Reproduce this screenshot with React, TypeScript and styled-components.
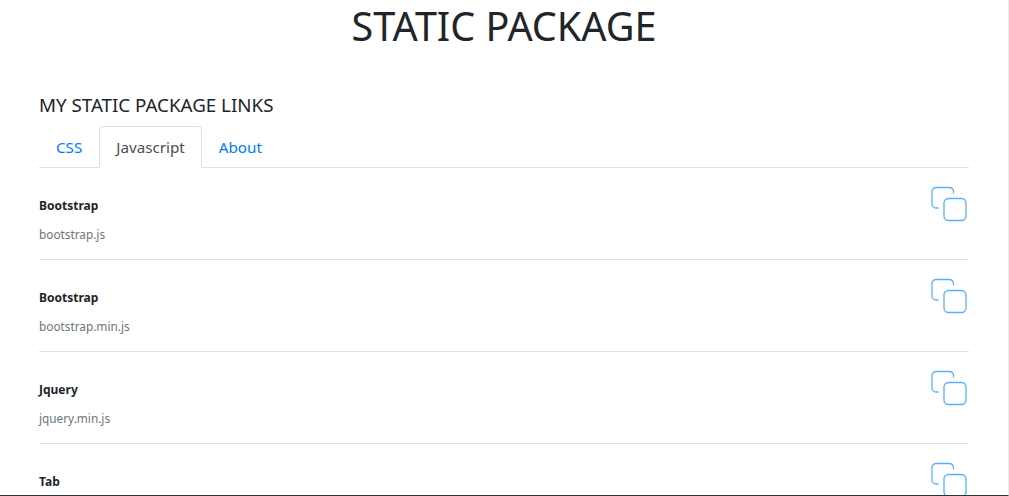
import styled, { createGlobalStyle } from 'styled-components'
import type { FC } from 'react'

const Global = createGlobalStyle`
  html, body {
    margin: 0;
    padding: 0;
    height: 100%;
    overflow: hidden;
    background: #fff;
  }
  * { box-sizing: border-box; }
`

const Page = styled.div`
  width: 1009px;
  height: 496px;
  overflow: hidden;
  background: #fff;
  border-right: 1px solid #ececec;
  border-bottom: 1px solid #2b333b;
  font-family: "Noto Sans", "Open Sans", sans-serif;
  color: #212529;
`

const Title = styled.h1`
  margin: 0;
  height: 92px;
  font-size: 39.5px;
  font-weight: 400;
  line-height: 52px;
  text-align: center;
  color: #212529;
`

const Container = styled.div`
  width: 930px;
  margin-left: 39px;
`

const Heading = styled.h2`
  margin: -1px 0 7px;
  font-size: 18.75px;
  font-weight: 400;
  line-height: 28px;
  color: #212529;
`

const Tabs = styled.ul`
  display: flex;
  margin: 0;
  padding: 0;
  list-style: none;
  border-bottom: 1px solid #dee2e6;
  height: 42px;
`

const Tab = styled.li<{ $active?: boolean }>`
  height: 42px;
  padding: 0 16px;
  font-size: 15.2px;
  line-height: 40px;
  color: ${p => (p.$active ? '#495057' : '#007bff')};
  background: ${p => (p.$active ? '#fff' : 'transparent')};
  border: 1px solid ${p => (p.$active ? '#dee2e6' : 'transparent')};
  border-bottom-color: ${p => (p.$active ? '#fff' : 'transparent')};
  border-radius: 4px 4px 0 0;
`

const Row = styled.div`
  display: flex;
  justify-content: space-between;
  height: 92px;
  padding-top: 28px;
  border-bottom: 1px solid #dee2e6;
`

const Name = styled.div`
  font-size: 12px;
  font-weight: 700;
  line-height: 20px;
  color: #212529;
`

const File = styled.div`
  margin-top: 8px;
  font-size: 11.8px;
  line-height: 20px;
  color: #6c757d;
`

const CopyButton = styled.div`
  align-self: flex-start;
  margin: -10px 2px 0 0;
  width: 36px;
  height: 36px;
  color: #5aaeff;
`

const CopyIcon: FC = () => (
  <svg width="36" height="36" viewBox="0 0 36 36" fill="none" stroke="currentColor" strokeWidth="1.3">
    <rect x="13" y="12.5" width="22" height="22" rx="4.5" />
    <path d="M22.5 7.5V5.5a4 4 0 0 0-4-4H5a4 4 0 0 0-4 4V18a4 4 0 0 0 4 4h2.5" />
  </svg>
)

const links = [
  { name: 'Bootstrap', file: 'bootstrap.js' },
  { name: 'Bootstrap', file: 'bootstrap.min.js' },
  { name: 'Jquery', file: 'jquery.min.js' },
  { name: 'Tab' },
]

export default function App() {
  return (
    <Page>
      <Global />
      <Title>STATIC PACKAGE</Title>
      <Container>
        <Heading>MY STATIC PACKAGE LINKS</Heading>
        <Tabs>
          <Tab>CSS</Tab>
          <Tab $active>Javascript</Tab>
          <Tab>About</Tab>
        </Tabs>
        {links.map(link => (
          <Row key={link.file ?? link.name}>
            <div>
              <Name>{link.name}</Name>
              {link.file && <File>{link.file}</File>}
            </div>
            <CopyButton>
              <CopyIcon />
            </CopyButton>
          </Row>
        ))}
      </Container>
    </Page>
  )
}
